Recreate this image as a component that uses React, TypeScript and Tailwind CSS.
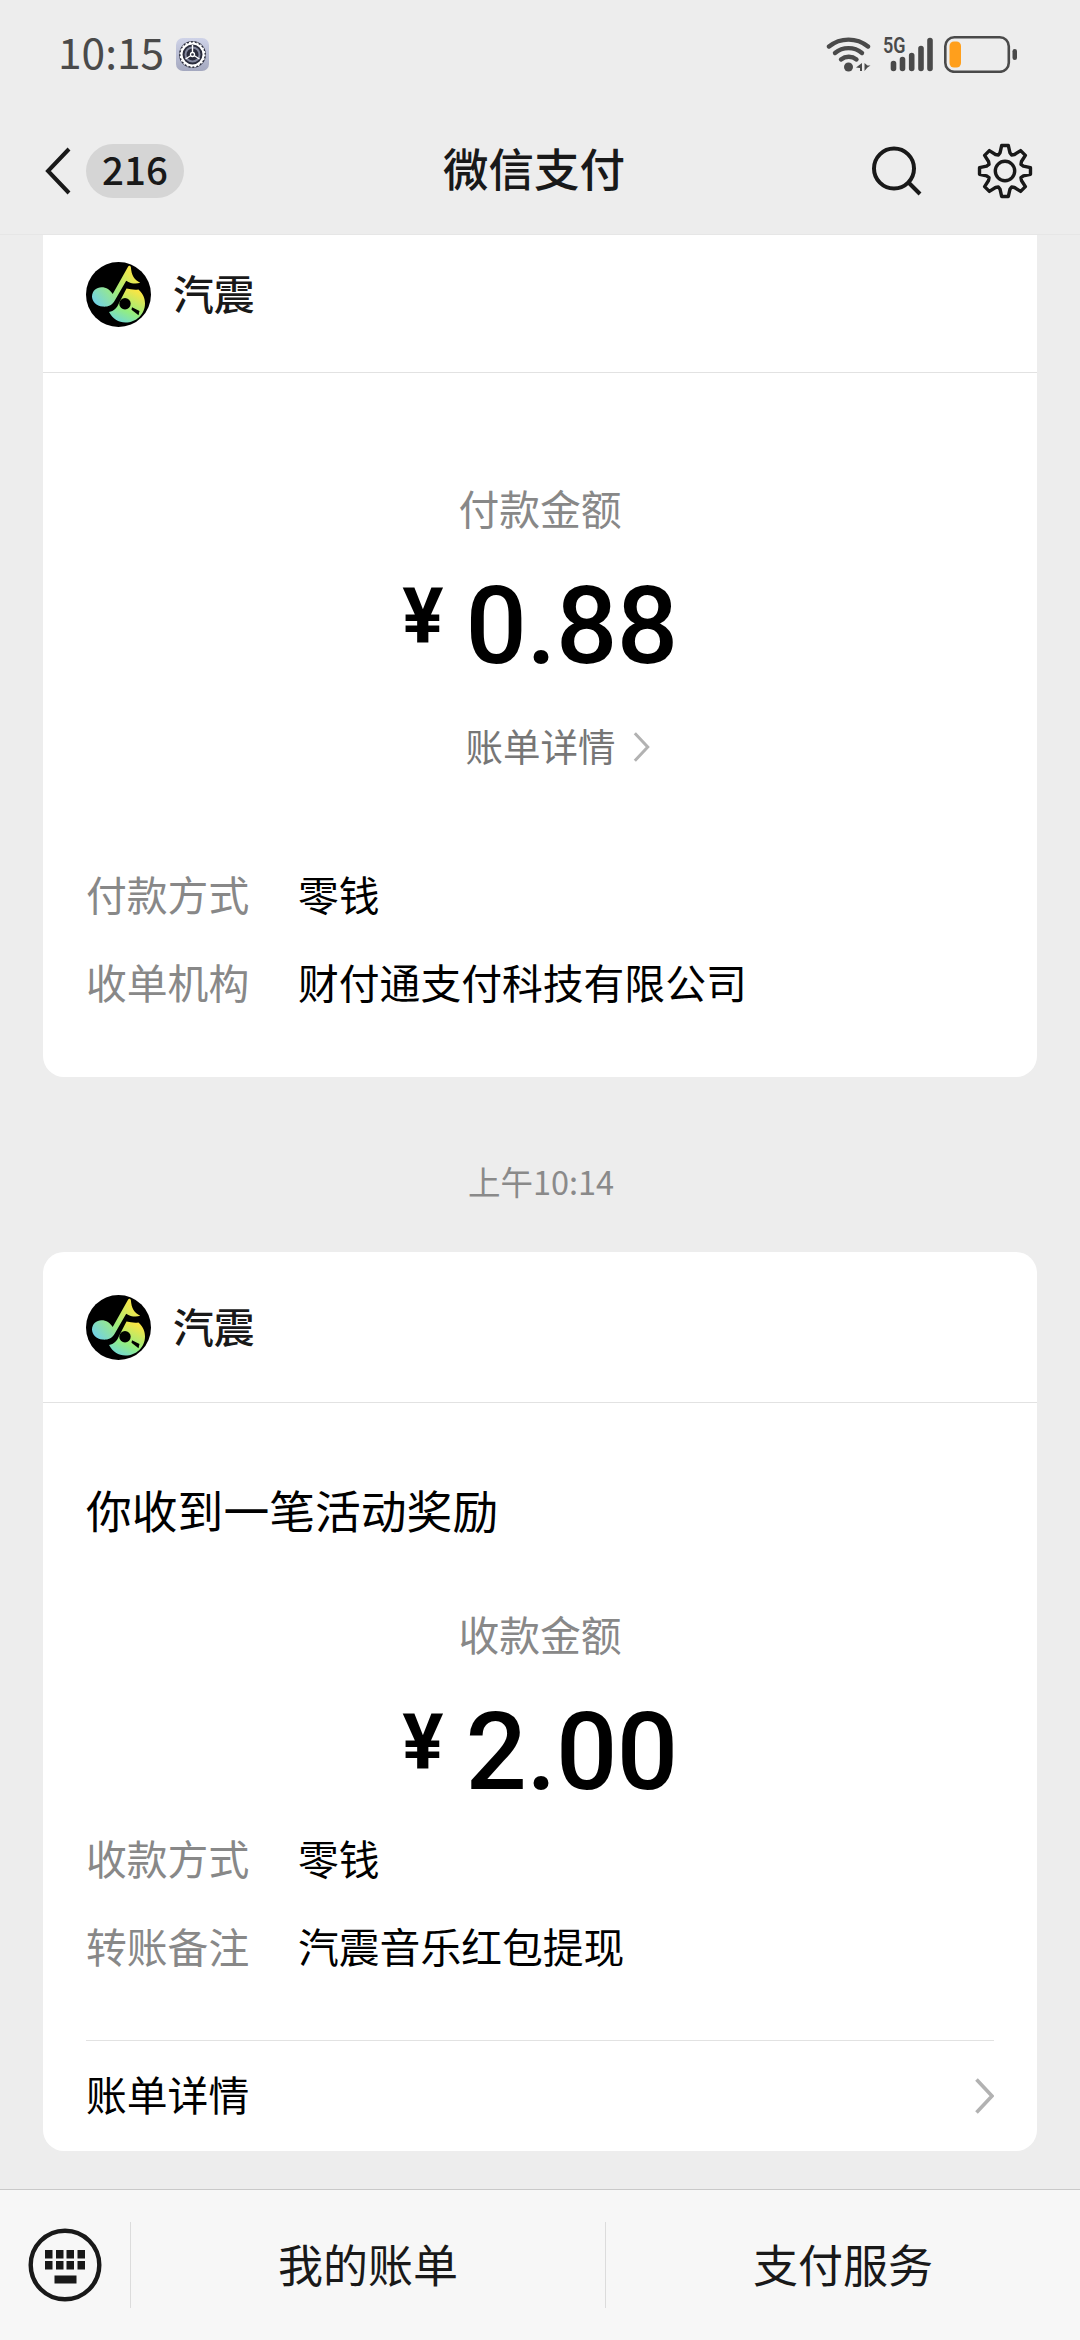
import type { ReactNode } from "react";

const BILL_ROWS = [
  { label: "付款方式", value: "零钱" },
  { label: "收单机构", value: "财付通支付科技有限公司" },
];

const REWARD_ROWS = [
  { label: "收款方式", value: "零钱" },
  { label: "转账备注", value: "汽震音乐红包提现" },
];

const MENU = ["我的账单", "支付服务"];

// one tooth of the settings gear, rotated 8 times
const TEETH = [0, 45, 90, 135, 180, 225, 270, 315];

function gearPath() {
  const pts: string[] = [];
  for (const deg of TEETH) {
    for (const [r, off] of [
      [17.3, -22.5],
      [19, -15],
      [25.7, -7.5],
      [25.7, 7.5],
      [19, 15],
    ]) {
      const a = ((deg + off - 90) * Math.PI) / 180;
      pts.push(`${(28 + r * Math.cos(a)).toFixed(2)} ${(28 + r * Math.sin(a)).toFixed(2)}`);
    }
  }
  return `M${pts.join("L")}Z`;
}

export default function App() {
  return (
    <div className="flex h-[2340px] w-[1080px] flex-col overflow-hidden bg-[#ededed] font-['Noto_Sans_CJK_SC',sans-serif] text-[#191919]">
      <StatusBar />
      <NavBar />

      <main className="flex flex-1 flex-col px-[43px]">
        <section className="h-[842px] rounded-b-[21px] bg-white">
          <Merchant className="h-[138px] pb-[19px]" />
          <Amount label="付款金额" value="0.88" className="pt-[105px]" />
          <div className="mt-[36px] flex h-[56px] items-center justify-center pl-[35px] text-[37.5px] leading-[56px] text-[#767676]">
            账单详情
            <Chevron className="ml-[17px] mt-[4px] h-[30px] w-[17px]" />
          </div>
          <Rows rows={BILL_ROWS} className="mt-[91px]" />
        </section>

        <div className="flex h-[175px] items-center justify-center pl-[2px] pt-[32px] text-[32.5px] leading-[40px] text-[#8a8a8a]">
          上午10:14
        </div>

        <section className="h-[899px] rounded-[21px] bg-white">
          <Merchant className="h-[151px]" />
          <p className="mt-[76px] px-[43px] text-[45.8px] leading-[60px] text-black">你收到一笔活动奖励</p>
          <Amount label="收款金额" value="2.00" className="pt-[65px]" />
          <Rows rows={REWARD_ROWS} className="mt-[21px]" />
          <div className="mx-[43px] mt-[64px] flex h-[111px] items-center justify-between border-t border-[#e2e2e2] text-[40.8px] leading-[60px] text-black">
            <span className="pb-[4px]">账单详情</span>
            <Chevron className="h-[36px] w-[19px]" />
          </div>
        </section>
      </main>

      <footer className="flex h-[151px] items-center border-t border-[#c9c9c9] bg-[#f7f7f7]">
        <div className="flex w-[130px] justify-center">
          <KeyboardIcon />
        </div>
        {MENU.map((item) => (
          <div
            key={item}
            className="flex h-[86px] flex-1 items-center justify-center border-l border-[#dcdcdc] pb-[3px] text-[45px] leading-[60px]"
          >
            {item}
          </div>
        ))}
      </footer>
    </div>
  );
}

function StatusBar() {
  return (
    <header className="flex h-[108px] items-center pl-[58px] pr-[62px] text-[#4a4a4a]">
      <span className="pb-[6px] text-[42.5px] leading-[60px]">10:15</span>
      <SettingsBadge />
      <div className="ml-auto flex items-center">
        <WifiIcon />
        <SignalIcon />
        <BatteryIcon />
      </div>
    </header>
  );
}

function NavBar() {
  return (
    <nav className="flex h-[127px] items-center border-b border-[#e6e6e6] pl-[45px] pr-[47px]">
      <div className="flex flex-1 items-center">
        <svg className="h-[48px] w-[27px]" viewBox="0 0 27 48" fill="none" stroke="#191919" strokeWidth="4">
          <path d="M24 2 3 24l21 22" />
        </svg>
        <span className="ml-[14px] flex h-[54px] w-[98px] items-center justify-center rounded-full bg-[#d5d5d5] pb-[6px] text-[38.5px] font-medium leading-[48px]">
          216
        </span>
      </div>
      <h1 className="pb-[8px] pr-[10px] text-[45.5px] font-medium leading-[60px]">微信支付</h1>
      <div className="flex flex-1 items-center justify-end gap-[55px]">
        <svg className="h-[52px] w-[52px]" viewBox="0 0 52 52" fill="none" stroke="#191919" strokeWidth="4">
          <circle cx="24" cy="23.5" r="20" />
          <path d="m38.5 37.5 11.5 11.5" />
        </svg>
        <svg className="h-[56px] w-[56px]" viewBox="0 0 56 56" fill="none" stroke="#191919" strokeWidth="3.4" strokeLinejoin="round">
          <path d={gearPath()} />
          <circle cx="28" cy="28" r="9.7" />
        </svg>
      </div>
    </nav>
  );
}

function Merchant({ className }: { className: string }) {
  return (
    <div className={`flex items-center border-b border-[#e2e2e2] px-[43px] ${className}`}>
      <MusicLogo />
      <span className="ml-[22px] pb-[3px] text-[40.8px] font-medium leading-[60px]">汽震</span>
    </div>
  );
}

function Amount({ label, value, className }: { label: string; value: ReactNode; className: string }) {
  return (
    <div className={`flex flex-col items-center ${className}`}>
      <span className="text-[40.8px] leading-[60px] text-[#888]">{label}</span>
      <div className="mt-[33px] flex h-[110px] items-start font-[Roboto,sans-serif] font-medium text-black">
        <span className="mr-[22px] text-[77px] font-bold leading-[92px]">¥</span>
        <span className="text-[108px] leading-[110px] tracking-[-0.5px]">{value}</span>
      </div>
    </div>
  );
}

function Rows({ rows, className }: { rows: { label: string; value: string }[]; className: string }) {
  return (
    <dl className={`flex flex-col gap-[28px] px-[43px] text-[40.8px] leading-[60px] ${className}`}>
      {rows.map((row) => (
        <div key={row.label} className="flex">
          <dt className="w-[212px] text-[#888]">{row.label}</dt>
          <dd className="text-black">{row.value}</dd>
        </div>
      ))}
    </dl>
  );
}

function Chevron({ className }: { className: string }) {
  return (
    <svg className={className} viewBox="0 0 19 36" fill="none" stroke="#b2b2b2" strokeWidth="3.6">
      <path d="M1.5 1.5 17 18 1.5 34.5" />
    </svg>
  );
}

function MusicLogo() {
  return (
    <svg className="h-[65px] w-[65px]" viewBox="0 0 65 65">
      <defs>
        <linearGradient id="note" gradientUnits="userSpaceOnUse" x1="8" y1="42" x2="46" y2="10">
          <stop offset="0" stopColor="#6fd0ea" />
          <stop offset="0.5" stopColor="#9eec7c" />
          <stop offset="1" stopColor="#f6e648" />
        </linearGradient>
        <linearGradient id="disc" gradientUnits="userSpaceOnUse" x1="30" y1="60" x2="46" y2="27">
          <stop offset="0" stopColor="#6fd6dc" />
          <stop offset="0.4" stopColor="#93ee80" />
          <stop offset="1" stopColor="#f8e545" />
        </linearGradient>
      </defs>
      <circle cx="32.5" cy="32.5" r="32.5" fill="#000" />
      <path
        d="M40.5 26.5c4 1 8 1.500 12 1 5 5 6.500 9 6.500 14 0 11-9 19-19.500 19-7 0-13-4-16.500-10.500 5-1 8-4 10-9Z"
        fill="url(#disc)"
      />
      <path
        d="M42.3 4.3c1-1 2.300-.5 2.600 1 .5 8 3.500 12.500 9.300 15.500-4 1.500-9.500 1-14-2L28.5 39c-3 5-7.500 6-12 5.600C10.5 44 6 39.5 6 34.5 6 29 10.5 25.3 15.5 25.3c5 0 8.500 2.700 11.200 6.700Z"
        fill="url(#note)"
      />
      <circle cx="39" cy="41.7" r="5.7" fill="#000" />
      <path d="m46 45.3 7.500 3.700-1 4.200-7-5.400Z" fill="#000" />
    </svg>
  );
}

function SettingsBadge() {
  return (
    <svg className="ml-[12px] h-[33px] w-[33px]" viewBox="0 0 33 33">
      <defs>
        <linearGradient id="badge" x1="0" y1="0" x2="0" y2="1">
          <stop offset="0" stopColor="#cfd3e8" />
          <stop offset="1" stopColor="#a4a8bf" />
        </linearGradient>
      </defs>
      <rect width="33" height="33" rx="7" fill="url(#badge)" />
      <circle cx="16.5" cy="16.5" r="13.5" fill="#2a2c3c" />
      <circle cx="16.5" cy="16.5" r="11" fill="none" stroke="#fff" strokeWidth="2" />
      <circle cx="16.5" cy="16.5" r="12.3" fill="none" stroke="#fff" strokeWidth="1.4" strokeDasharray="2 1.86" />
      <circle cx="16.5" cy="16.5" r="7" fill="none" stroke="#82869c" strokeWidth="2" />
      <path d="M16.5 7v9.5m0 0-7 4.5m7-4.5 7 4.5" stroke="#fff" strokeWidth="1.4" />
      <circle cx="16.5" cy="16.5" r="2" fill="#2a2c3c" stroke="#fff" strokeWidth="1.3" />
    </svg>
  );
}

function WifiIcon() {
  return (
    <svg className="h-[36px] w-[46px]" viewBox="0 0 46 36" fill="none" stroke="#4a4a4a" strokeWidth="4.4" strokeLinecap="round">
      <path d="M3 10.5a31 31 0 0 1 39 0" />
      <path d="M9 17a21 21 0 0 1 27 0" />
      <path d="M15 23.5a12.500 12.500 0 0 1 15.500 0" />
      <circle cx="22.5" cy="31" r="4.5" fill="#4a4a4a" stroke="none" />
      <path d="M36 27v8h-2v-3l-4-.5ZM38.5 27v8l3-3.500 3-2h-3Z" fill="#4a4a4a" stroke="none" />
    </svg>
  );
}

function SignalIcon() {
  return (
    <div className="relative ml-[10px] h-[36px] w-[52px]">
      <svg className="h-[36px] w-[52px]" viewBox="0 0 52 36" stroke="#4a4a4a" strokeWidth="5.6" strokeLinecap="round">
        <path d="M11.5 27.5v5M20.5 23.5v9M29.7 19.5v13M39 12.5v20M48 4.5v28" />
      </svg>
      <span className="absolute left-[1px] top-0 origin-left scale-x-[0.8] font-[Roboto,sans-serif] text-[22.5px] font-semibold leading-[18px]">
        5G
      </span>
    </div>
  );
}

function BatteryIcon() {
  return (
    <svg className="ml-[10px] h-[37px] w-[74px]" viewBox="0 0 74 37">
      <rect x="1.3" y="1.3" width="63.5" height="34.5" rx="9" fill="none" stroke="#4a4a4a" strokeWidth="2.6" />
      <rect x="5.5" y="5.5" width="11.5" height="26" rx="4.5" fill="#ff9f1c" />
      <rect x="68.5" y="13" width="4.5" height="11" rx="2.2" fill="#4a4a4a" />
    </svg>
  );
}

function KeyboardIcon() {
  return (
    <svg className="h-[74px] w-[74px]" viewBox="0 0 74 74" fill="#191919">
      <circle cx="37" cy="37" r="34.3" fill="none" stroke="#191919" strokeWidth="4.4" />
      {[17, 28, 38.5, 49.5].map((x) => (
        <g key={x}>
          <rect x={x} y="22" width="7.5" height="8.5" />
          <rect x={x} y="33" width="7.5" height="8.5" />
        </g>
      ))}
      <rect x="26.5" y="47.5" width="22" height="8" />
    </svg>
  );
}
